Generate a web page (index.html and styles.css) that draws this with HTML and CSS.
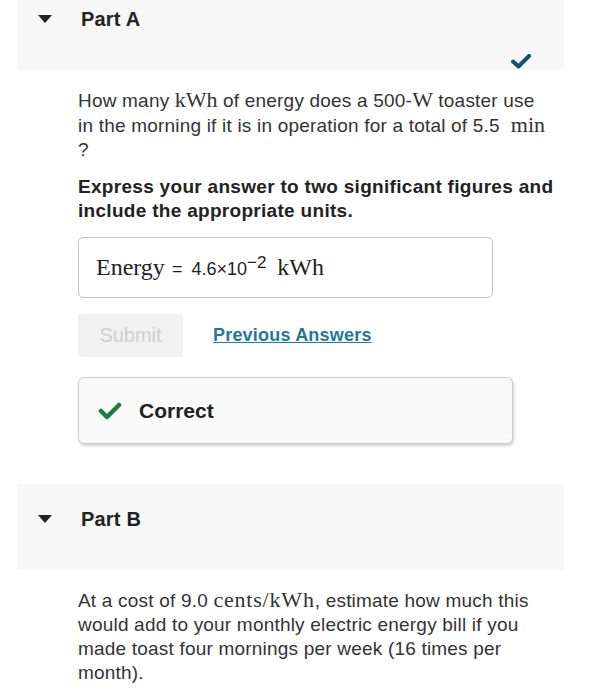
FILE: index.html
```html
<!DOCTYPE html>
<html lang="en">

<head>
    <meta charset="UTF-8">
    <meta name="viewport" content="width=device-width, initial-scale=1.0">
    <title>Parts</title>
    <link rel="stylesheet" href="styles.css">
</head>

<body>
    <div class="page">
        <div class="part">
            <div class="part-header">
                <div class="part-title">
                    <span class="caret"></span>
                    <h3>Part A</h3>
                </div>
                <svg class="done" width="20" height="15" viewBox="0 0 20 15">
                    <path d="M2 7.5 L7.5 12.5 L18 2" fill="none" stroke="#0f5468" stroke-width="4" stroke-linejoin="round" stroke-linecap="round"/>
                </svg>
            </div>
            <div class="part-body">
                <p class="question">How many <span class="math">kWh</span> of energy does a 500-<span class="math">W</span> toaster use in the morning if it is in operation for a total of 5.5 &nbsp;<span class="math">min</span> ?</p>
                <p class="instruction">Express your answer to two significant figures and include the appropriate units.</p>

                <div class="answer-box">
                    <span class="math big">Energy</span>
                    <span class="eq">=</span>
                    <span class="value">4.6×10<sup>−2</sup></span>
                    <span class="math big">kWh</span>
                </div>

                <div class="actions">
                    <button class="submit" disabled>Submit</button>
                    <a href="#" class="prev-link">Previous Answers</a>
                </div>

                <div class="feedback">
                    <svg width="24" height="18" viewBox="0 0 24 18">
                        <path d="M3 9 L9 15 L21 3" fill="none" stroke="#1b7d3e" stroke-width="4.5" stroke-linejoin="round" stroke-linecap="round"/>
                    </svg>
                    <span>Correct</span>
                </div>
            </div>
        </div>

        <div class="part">
            <div class="part-header">
                <div class="part-title">
                    <span class="caret"></span>
                    <h3>Part B</h3>
                </div>
            </div>
            <div class="part-body">
                <p class="question">At a cost of 9.0 <span class="math wide">cents/kWh</span>, estimate how much this would add to your monthly electric energy bill if you made toast four mornings per week (16 times per month).</p>
            </div>
        </div>
    </div>
</body>

</html>
```

FILE: styles.css
```css
*{
    box-sizing: border-box;
    padding: 0;
    margin: 0;
}

body{
    font-family: "Liberation Sans", Arial, sans-serif;
    color: #333;
    background: #fff;
}

.page{
    margin-top: -16px;
}

.part-header{
    display: flex;
    flex-direction: column;
    height: 86px;
    margin: 0 45px 0 17px;
    padding: 25px 0 0 21px;
    background-color: #f7f7f7;
}

.part-title{
    display: flex;
    align-items: center;
    gap: 29px;
}

.part-title h3{
    font-size: 20px;
    line-height: 20px;
    font-weight: bold;
    color: #222;
    letter-spacing: 0.2px;
}

.caret{
    width: 0;
    height: 0;
    border-left: 7px solid transparent;
    border-right: 7px solid transparent;
    border-top: 8px solid #222;
}

.done{
    align-self: flex-end;
    margin-top: auto;
    margin-right: 33px;
    margin-bottom: 1px;
}

.part-body{
    padding: 18px 0 0 78px;
    max-width: 554px;
}

.question{
    font-size: 19px;
    line-height: 24px;
    letter-spacing: 0.2px;
}

.math{
    font-family: "Liberation Serif", "DejaVu Serif", serif;
    font-size: 22px;
    letter-spacing: 0;
}

.math.wide{
    letter-spacing: 0.8px;
}

.instruction{
    margin-top: 13px;
    font-size: 19px;
    line-height: 24px;
    font-weight: bold;
    letter-spacing: 0.3px;
    color: #222;
}

.answer-box{
    display: flex;
    align-items: baseline;
    gap: 7px;
    width: 415px;
    height: 61px;
    margin-top: 14px;
    padding: 16px 17px 0;
    border: 1.5px solid #c4c4c4;
    border-radius: 5px;
    color: #222;
}

.answer-box .big{
    font-size: 24px;
}

.answer-box .eq{
    font-size: 18px;
    margin-right: 2px;
}

.answer-box .value{
    font-size: 18px;
    margin-right: 4px;
}

.answer-box sup{
    font-size: 17px;
    line-height: 0;
}

.actions{
    display: flex;
    align-items: center;
    gap: 30px;
    margin-top: 16px;
}

.submit{
    width: 105px;
    height: 43px;
    border: none;
    border-radius: 3px;
    background-color: #f1f1f1;
    color: #cfcfcf;
    font-family: "Liberation Sans", Arial, sans-serif;
    font-size: 20px;
}

.prev-link{
    font-size: 18px;
    font-weight: bold;
    letter-spacing: 0.2px;
    color: #1f7a99;
}

.feedback{
    display: flex;
    align-items: center;
    gap: 17px;
    width: 435px;
    height: 67px;
    margin-top: 20px;
    margin-bottom: 40px;
    padding-left: 19px;
    border: 1.5px solid #cdcdcd;
    border-radius: 6px;
    background-color: #fafafa;
    box-shadow: rgba(0, 0, 0, 0.18) 1px 2px 3px;
    font-size: 21px;
    font-weight: bold;
    color: #222;
}
```
